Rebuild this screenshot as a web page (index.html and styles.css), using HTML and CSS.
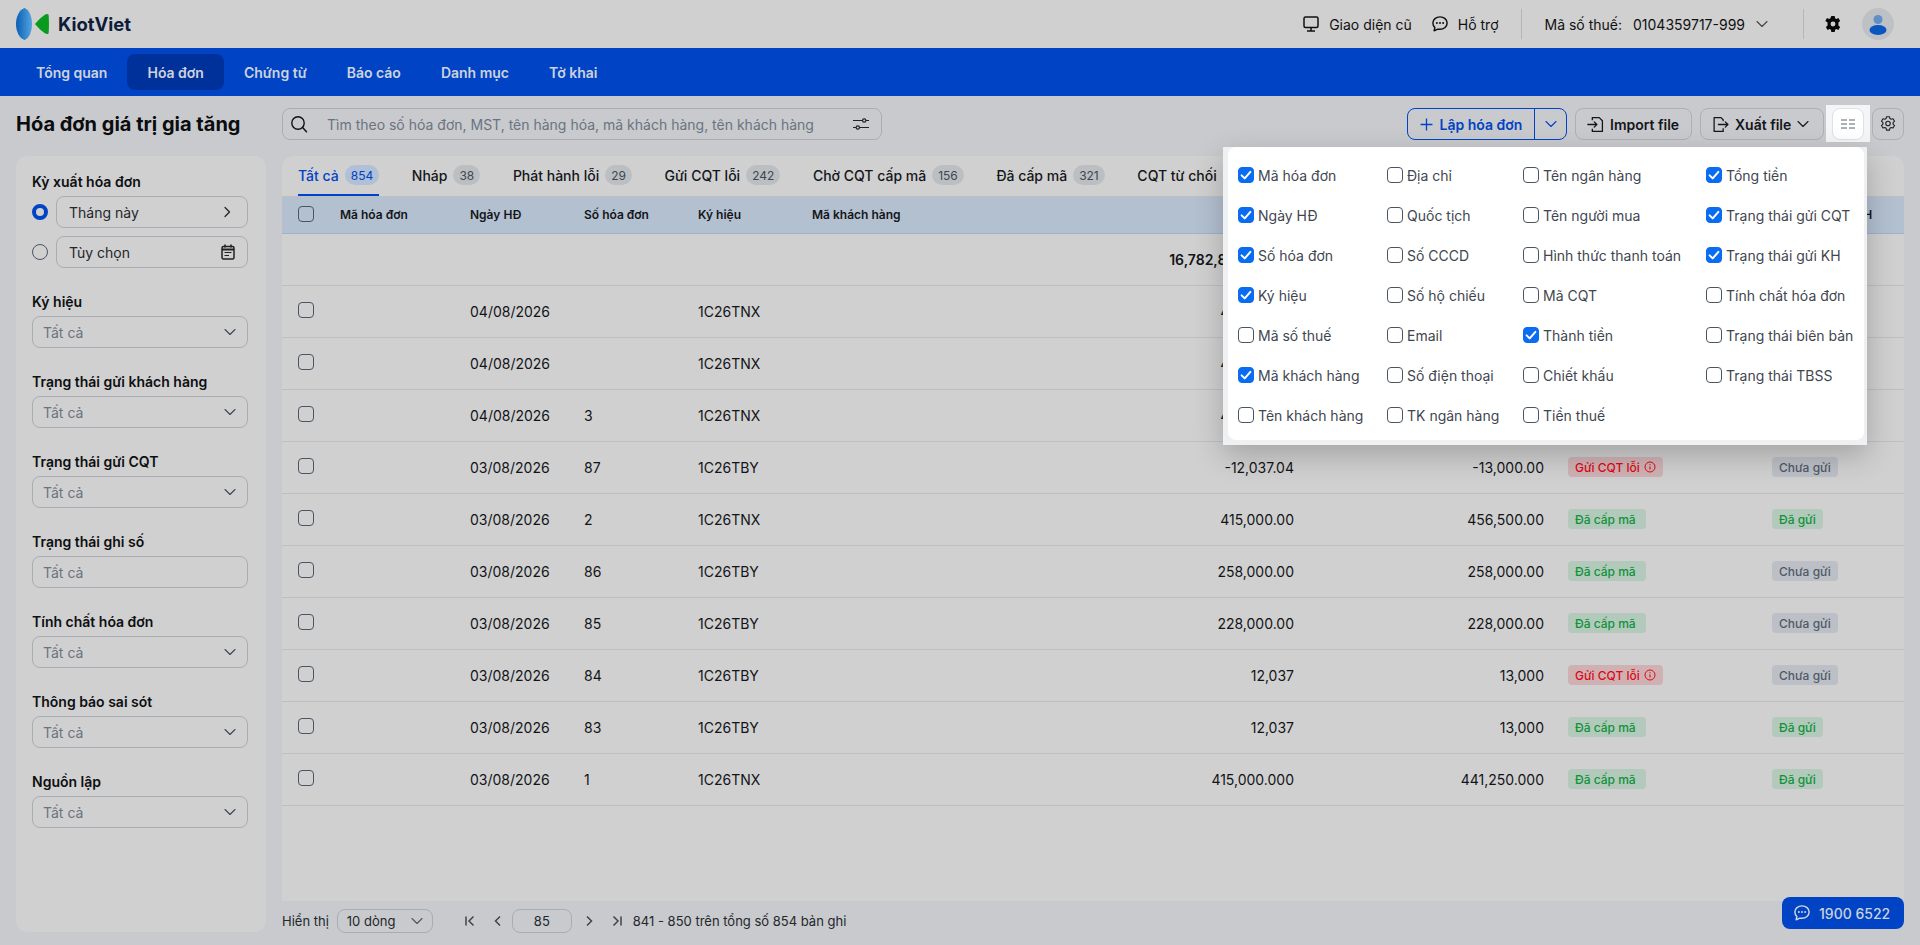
FILE: index.html
```html
<!DOCTYPE html>
<html lang="vi">
<head>
<meta charset="utf-8">
<title>Hóa đơn giá trị gia tăng</title>
<link rel="stylesheet" href="styles.css">
</head>
<body>
<svg class="sprite" width="0" height="0" aria-hidden="true">
  <symbol id="i-down" viewBox="0 0 12 12"><path d="M1 3.500 6 8.500l5-5" fill="none" stroke="currentColor" stroke-width="1.100" stroke-linecap="round" stroke-linejoin="round"/></symbol>
  <symbol id="i-check" viewBox="0 0 16 16"><path d="M3.600 8.400 6.700 11.400 12.400 4.900" fill="none" stroke="#fff" stroke-width="2" stroke-linecap="round" stroke-linejoin="round"/></symbol>
  <symbol id="i-info" viewBox="0 0 12 12"><circle cx="6" cy="6" r="5" fill="none" stroke="currentColor" stroke-width="1"/><path d="M6 5.400v3.200M6 3.200v1" stroke="currentColor" stroke-width="1.100"/></symbol>
  <symbol id="i-chat" viewBox="0.800 1 14.400 14.400"><path d="M8 1.800c3.600 0 6.400 2.400 6.400 5.600S11.600 13 8 13c-.7 0-1.300-.1-1.900-.2L2.700 14.300l.7-2.800C2.200 10.500 1.600 9.100 1.600 7.400 1.600 4.200 4.400 1.800 8 1.800z" fill="none" stroke="currentColor" stroke-width="1.300" stroke-linejoin="round"/><circle cx="5.200" cy="7.400" r=".9" fill="currentColor"/><circle cx="8" cy="7.400" r=".9" fill="currentColor"/><circle cx="10.800" cy="7.400" r=".9" fill="currentColor"/></symbol>
</svg>

<div class="page">
  <header class="topbar">
    <div class="brand">
      <svg class="logo" viewBox="0 0 33 32" width="33" height="32">
        <defs><linearGradient id="lg-blue" x1="0" y1="0" x2="1" y2="0"><stop offset="0" stop-color="#0a5fb4"/><stop offset="1" stop-color="#55a3de"/></linearGradient></defs>
        <path d="M8.500 0C3 2 0 9 0 16s3 14 8.500 16c5-2 7.500-9 7.500-16S13.500 2 8.500 0z" fill="url(#lg-blue)"/>
        <path d="M32.500 6.500c.6 3 .6 16 0 19-1 1-2.500.5-4-.5-3.500-2.300-6.500-5.500-9.500-9 3-3.500 6-6.700 9.500-9 1.500-1 3-1.500 4-.5z" fill="#0a9a1e"/>
      </svg>
      <span class="brand-name">KiotViet</span>
    </div>
    <div class="top-actions">
      <a class="top-link">
        <svg width="16" height="16" viewBox="0 0 16 16"><rect x="1" y="1" width="14" height="10.500" rx="1.500" fill="none" stroke="currentColor" stroke-width="1.500"/><path d="M8 11.500V15M4 15h8" stroke="currentColor" stroke-width="1.500"/></svg>
        <span>Giao diện cũ</span>
      </a>
      <a class="top-link">
        <svg width="16" height="16"><use href="#i-chat"/></svg>
        <span>Hỗ trợ</span>
      </a>
      <span class="vline vline-a"></span>
      <div class="tax">
        <span class="tax-label">Mã số thuế:</span>
        <span class="tax-no">0104359717-999</span>
        <svg class="tax-chev" width="12" height="12"><use href="#i-down"/></svg>
      </div>
      <span class="vline vline-b"></span>
      <svg class="gear" width="16" height="16" viewBox="1 0.800 14 14.400"><path fill-rule="evenodd" d="M6.500.8h3l.4 2 1.100.6 1.900-.7 1.500 2.600-1.500 1.300v2.800l1.500 1.300-1.500 2.600-1.900-.7-1.100.6-.4 2h-3l-.4-2-1.100-.6-1.900.7-1.500-2.600 1.500-1.300V6.600L1.100 5.300l1.500-2.600 1.900.7 1.100-.6zM8 5.800a2.200 2.200 0 1 0 0 4.400 2.200 2.200 0 0 0 0-4.400z" fill="#0a0a0a"/></svg>
      <span class="avatar">
        <svg width="32" height="32" viewBox="0 0 32 32"><circle cx="16" cy="11.500" r="4.500" fill="#5f8fc7"/><ellipse cx="16" cy="22" rx="8.500" ry="5" fill="#0a55c0"/></svg>
      </span>
    </div>
  </header>

  <nav class="mainnav">
    <a class="nav-item">Tổng quan</a>
    <a class="nav-item active">Hóa đơn</a>
    <a class="nav-item">Chứng từ</a>
    <a class="nav-item">Báo cáo</a>
    <a class="nav-item">Danh mục</a>
    <a class="nav-item">Tờ khai</a>
  </nav>

  <section class="toolbar">
    <h1 class="page-title">Hóa đơn giá trị gia tăng</h1>
    <div class="search">
      <svg class="search-ico" width="18" height="18" viewBox="0 0 18 18"><circle cx="8" cy="8" r="6.200" fill="none" stroke="#111" stroke-width="1.400"/><path d="M12.600 12.600 16.500 16.800" stroke="#111" stroke-width="1.500" stroke-linecap="round"/></svg>
      <span class="search-ph">Tìm theo số hóa đơn, MST, tên hàng hóa, mã khách hàng, tên khách hàng</span>
      <svg class="search-filter" width="16" height="16" viewBox="0 0 16 16"><path d="M0 4.500h9.500M13 4.500h3M0 11.500h3M6.500 11.500H16" stroke="#222" stroke-width="1.200"/><circle cx="11.200" cy="4.500" r="1.700" fill="none" stroke="#222" stroke-width="1.200"/><circle cx="4.800" cy="11.500" r="1.700" fill="none" stroke="#222" stroke-width="1.200"/></svg>
    </div>
    <div class="tool-actions">
      <div class="split">
        <button class="split-main">
          <svg width="13" height="13" viewBox="0 0 12 12"><path d="M6 .5v11M.5 6h11" stroke="currentColor" stroke-width="1.200"/></svg>
          <span>Lập hóa đơn</span>
        </button>
        <button class="split-arrow"><svg width="12" height="12"><use href="#i-down"/></svg></button>
      </div>
      <button class="tool-btn btn-import">
        <svg width="17" height="17" viewBox="0 0 16 16"><path d="M5 4V1.500h6.500L14.500 4.500V14.500H5V12" fill="none" stroke="currentColor" stroke-width="1.200" stroke-linejoin="round"/><path d="M.8 8h8.500M6.800 5.500 9.300 8l-2.500 2.500" fill="none" stroke="currentColor" stroke-width="1.200" stroke-linecap="round" stroke-linejoin="round"/></svg>
        <span>Import file</span>
      </button>
      <button class="tool-btn btn-export">
        <svg width="17" height="17" viewBox="0 0 16 16"><path d="M10.500 5V3.500l-2-2H2v13h8.500V11.500" fill="none" stroke="currentColor" stroke-width="1.200" stroke-linejoin="round"/><path d="M6 8h9M12.500 5.500 15 8l-2.500 2.500" fill="none" stroke="currentColor" stroke-width="1.200" stroke-linecap="round" stroke-linejoin="round"/></svg>
        <span>Xuất file</span>
        <svg width="12" height="12"><use href="#i-down"/></svg>
      </button>
      <div class="spot">
        <button class="icon-btn icon-btn-on">
          <svg width="14" height="10" viewBox="0 0 14 10"><path d="M0 1h6M8 1h6M0 5h6M8 5h6M0 9h6M8 9h6" stroke="#5b6470" stroke-width="1"/></svg>
        </button>
      </div>
      <button class="icon-btn">
        <svg width="18" height="18" viewBox="0 0 16 16"><path d="M6.700 1.500h2.600l.4 1.700 1.100.6 1.700-.5 1.300 2.200-1.300 1.300v1.300l1.300 1.300-1.300 2.200-1.700-.5-1.100.6-.4 1.700H6.700l-.4-1.700-1.100-.6-1.700.5L2.200 9.400l1.300-1.300V6.800L2.200 5.500l1.300-2.200 1.700.5 1.100-.6z" fill="none" stroke="#222" stroke-width="1" stroke-linejoin="round"/><circle cx="8" cy="7.500" r="2" fill="none" stroke="#222" stroke-width="1"/></svg>
      </button>
    </div>
  </section>

  <div class="workspace">
    <aside class="filters">
      <div class="fgroup">
        <label class="flabel">Kỳ xuất hóa đơn</label>
        <div class="period-row">
          <span class="radio radio-on"></span>
          <div class="field field-dark"><span>Tháng này</span>
            <svg width="12" height="12" viewBox="0 0 12 12"><path d="M4 1.500 8.500 6 4 10.500" fill="none" stroke="#222" stroke-width="1.200" stroke-linecap="round" stroke-linejoin="round"/></svg>
          </div>
        </div>
        <div class="period-row">
          <span class="radio"></span>
          <div class="field field-dark"><span>Tùy chọn</span>
            <svg class="cal" width="14" height="16" viewBox="0 0 14 16"><path d="M4 .5v3M10 .5v3" stroke="#222" stroke-width="1.600"/><rect x="1" y="2.500" width="12" height="12.500" rx="1.500" fill="none" stroke="#222" stroke-width="1.500"/><path d="M1 5.500h12" stroke="#222" stroke-width="2"/><path d="M3.500 8.500h7M3.500 11.500h4.500" stroke="#222" stroke-width="1.200"/></svg>
          </div>
        </div>
      </div>
      <div class="fgroup"><label class="flabel">Ký hiệu</label><div class="field"><span>Tất cả</span><svg width="12" height="12"><use href="#i-down"/></svg></div></div>
      <div class="fgroup"><label class="flabel">Trạng thái gửi khách hàng</label><div class="field"><span>Tất cả</span><svg width="12" height="12"><use href="#i-down"/></svg></div></div>
      <div class="fgroup"><label class="flabel">Trạng thái gửi CQT</label><div class="field"><span>Tất cả</span><svg width="12" height="12"><use href="#i-down"/></svg></div></div>
      <div class="fgroup"><label class="flabel">Trạng thái ghi số</label><div class="field"><span>Tất cả</span></div></div>
      <div class="fgroup"><label class="flabel">Tính chất hóa đơn</label><div class="field"><span>Tất cả</span><svg width="12" height="12"><use href="#i-down"/></svg></div></div>
      <div class="fgroup"><label class="flabel">Thông báo sai sót</label><div class="field"><span>Tất cả</span><svg width="12" height="12"><use href="#i-down"/></svg></div></div>
      <div class="fgroup"><label class="flabel">Nguồn lập</label><div class="field"><span>Tất cả</span><svg width="12" height="12"><use href="#i-down"/></svg></div></div>
    </aside>

    <main class="content">
      <div class="card">
        <div class="tabs">
          <a class="tab tab-on"><span>Tất cả</span><b class="count">854</b></a>
          <a class="tab"><span>Nháp</span><b class="count">38</b></a>
          <a class="tab"><span>Phát hành lỗi</span><b class="count">29</b></a>
          <a class="tab"><span>Gửi CQT lỗi</span><b class="count">242</b></a>
          <a class="tab"><span>Chờ CQT cấp mã</span><b class="count">156</b></a>
          <a class="tab"><span>Đã cấp mã</span><b class="count">321</b></a>
          <a class="tab"><span>CQT từ chối</span><b class="count">12</b></a>
        </div>
        <table class="grid">
          <colgroup>
            <col class="c-check"><col class="c-a"><col class="c-b"><col class="c-b"><col class="c-b"><col class="c-cust"><col class="c-amt"><col class="c-total"><col class="c-cqt"><col class="c-kh">
          </colgroup>
          <thead>
            <tr>
              <th><span class="cb"></span></th><th>Mã hóa đơn</th><th>Ngày HĐ</th><th>Số hóa đơn</th><th>Ký hiệu</th><th>Mã khách hàng</th>
              <th class="num"></th><th class="num"></th><th></th><th class="th-kh">Trạng thái gửi KH</th>
            </tr>
          </thead>
          <tbody>
            <tr class="sum"><td colspan="6"></td><td class="num">16,782,845,310.25</td><td></td><td></td><td></td></tr>
            <tr><td><span class="cb"></span></td><td></td><td>04/08/2026</td><td></td><td>1C26TNX</td><td></td><td class="num">415,000.00</td><td></td><td></td><td></td></tr>
            <tr><td><span class="cb"></span></td><td></td><td>04/08/2026</td><td></td><td>1C26TNX</td><td></td><td class="num">415,000.00</td><td></td><td></td><td></td></tr>
            <tr><td><span class="cb"></span></td><td></td><td>04/08/2026</td><td>3</td><td>1C26TNX</td><td></td><td class="num">415,000.00</td><td></td><td></td><td></td></tr>
            <tr><td><span class="cb"></span></td><td></td><td>03/08/2026</td><td>87</td><td>1C26TBY</td><td></td><td class="num">-12,037.04</td><td class="num">-13,000.00</td><td><span class="tag err">Gửi CQT lỗi<svg width="12" height="12"><use href="#i-info"/></svg></span></td><td><span class="tag mute">Chưa gửi</span></td></tr>
            <tr><td><span class="cb"></span></td><td></td><td>03/08/2026</td><td>2</td><td>1C26TNX</td><td></td><td class="num">415,000.00</td><td class="num">456,500.00</td><td><span class="tag ok code">Đã cấp mã</span></td><td><span class="tag ok">Đã gửi</span></td></tr>
            <tr><td><span class="cb"></span></td><td></td><td>03/08/2026</td><td>86</td><td>1C26TBY</td><td></td><td class="num">258,000.00</td><td class="num">258,000.00</td><td><span class="tag ok code">Đã cấp mã</span></td><td><span class="tag mute">Chưa gửi</span></td></tr>
            <tr><td><span class="cb"></span></td><td></td><td>03/08/2026</td><td>85</td><td>1C26TBY</td><td></td><td class="num">228,000.00</td><td class="num">228,000.00</td><td><span class="tag ok code">Đã cấp mã</span></td><td><span class="tag mute">Chưa gửi</span></td></tr>
            <tr><td><span class="cb"></span></td><td></td><td>03/08/2026</td><td>84</td><td>1C26TBY</td><td></td><td class="num">12,037</td><td class="num">13,000</td><td><span class="tag err">Gửi CQT lỗi<svg width="12" height="12"><use href="#i-info"/></svg></span></td><td><span class="tag mute">Chưa gửi</span></td></tr>
            <tr><td><span class="cb"></span></td><td></td><td>03/08/2026</td><td>83</td><td>1C26TBY</td><td></td><td class="num">12,037</td><td class="num">13,000</td><td><span class="tag ok code">Đã cấp mã</span></td><td><span class="tag ok">Đã gửi</span></td></tr>
            <tr><td><span class="cb"></span></td><td></td><td>03/08/2026</td><td>1</td><td>1C26TNX</td><td></td><td class="num">415,000.000</td><td class="num">441,250.000</td><td><span class="tag ok code">Đã cấp mã</span></td><td><span class="tag ok">Đã gửi</span></td></tr>
          </tbody>
        </table>
      </div>
      <footer class="pager">
        <span class="pager-label">Hiển thị</span>
        <div class="pager-select"><span>10 dòng</span><svg width="12" height="12"><use href="#i-down"/></svg></div>
        <div class="pager-nav">
          <svg width="12" height="12" viewBox="0 0 12 12"><path d="M2 1.500v9M9.500 1.500 5 6l4.500 4.500" fill="none" stroke="#444" stroke-width="1.500"/></svg>
          <svg class="pg-prev" width="12" height="12" viewBox="0 0 12 12"><path d="M8 1.500 3.500 6 8 10.500" fill="none" stroke="#444" stroke-width="1.500"/></svg>
          <span class="pager-input">85</span>
          <svg class="pg-next" width="12" height="12" viewBox="0 0 12 12"><path d="M4 1.500 8.500 6 4 10.500" fill="none" stroke="#444" stroke-width="1.500"/></svg>
          <svg class="pg-last" width="12" height="12" viewBox="0 0 12 12"><path d="M10 1.500v9M2.500 1.500 7 6l-4.500 4.500" fill="none" stroke="#444" stroke-width="1.500"/></svg>
        </div>
        <span class="pager-info">841 - 850 trên tổng số 854 bản ghi</span>
      </footer>
    </main>
  </div>

  <div class="popup">
    <div class="popup-inner">
      <label class="opt"><span class="cb on"><svg width="16" height="16"><use href="#i-check"/></svg></span>Mã hóa đơn</label>
      <label class="opt"><span class="cb on"><svg width="16" height="16"><use href="#i-check"/></svg></span>Ngày HĐ</label>
      <label class="opt"><span class="cb on"><svg width="16" height="16"><use href="#i-check"/></svg></span>Số hóa đơn</label>
      <label class="opt"><span class="cb on"><svg width="16" height="16"><use href="#i-check"/></svg></span>Ký hiệu</label>
      <label class="opt"><span class="cb"></span>Mã số thuế</label>
      <label class="opt"><span class="cb on"><svg width="16" height="16"><use href="#i-check"/></svg></span>Mã khách hàng</label>
      <label class="opt"><span class="cb"></span>Tên khách hàng</label>

      <label class="opt"><span class="cb"></span>Địa chỉ</label>
      <label class="opt"><span class="cb"></span>Quốc tịch</label>
      <label class="opt"><span class="cb"></span>Số CCCD</label>
      <label class="opt"><span class="cb"></span>Số hộ chiếu</label>
      <label class="opt"><span class="cb"></span>Email</label>
      <label class="opt"><span class="cb"></span>Số điện thoại</label>
      <label class="opt"><span class="cb"></span>TK ngân hàng</label>

      <label class="opt"><span class="cb"></span>Tên ngân hàng</label>
      <label class="opt"><span class="cb"></span>Tên người mua</label>
      <label class="opt"><span class="cb"></span>Hình thức thanh toán</label>
      <label class="opt"><span class="cb"></span>Mã CQT</label>
      <label class="opt"><span class="cb on"><svg width="16" height="16"><use href="#i-check"/></svg></span>Thành tiền</label>
      <label class="opt"><span class="cb"></span>Chiết khấu</label>
      <label class="opt"><span class="cb"></span>Tiền thuế</label>

      <label class="opt"><span class="cb on"><svg width="16" height="16"><use href="#i-check"/></svg></span>Tổng tiền</label>
      <label class="opt"><span class="cb on"><svg width="16" height="16"><use href="#i-check"/></svg></span>Trạng thái gửi CQT</label>
      <label class="opt"><span class="cb on"><svg width="16" height="16"><use href="#i-check"/></svg></span>Trạng thái gửi KH</label>
      <label class="opt"><span class="cb"></span>Tính chất hóa đơn</label>
      <label class="opt"><span class="cb"></span>Trạng thái biên bản</label>
      <label class="opt"><span class="cb"></span>Trạng thái TBSS</label>
    </div>
  </div>

  <a class="hotline">
    <svg width="16" height="16"><use href="#i-chat"/></svg>
    <span>1900 6522</span>
  </a>
</div>
</body>
</html>
```
FILE: styles.css
```css
* { box-sizing: border-box; }
html, body { margin: 0; padding: 0; }
body {
  font-family: Inter, "Noto Sans", "Liberation Sans", sans-serif;
  font-size: 14px;
  color: #121417;
  background: #c8cacd;
}
.sprite { position: absolute; }
svg { display: block; flex: none; }
.page {
  position: relative;
  width: 1920px;
  height: 945px;
  overflow: hidden;
  display: flex;
  flex-direction: column;
}

/* top bar */
.topbar {
  height: 48px;
  flex: none;
  display: flex;
  align-items: center;
  justify-content: space-between;
  padding: 0 26px 0 16px;
  background: #d0d0d0;
}
.brand { display: flex; align-items: center; gap: 9px; }
.brand-name { font-size: 18.5px; font-weight: 700; color: #0d1c3a; }
.top-actions { display: flex; align-items: center; }
.top-link { display: flex; align-items: center; gap: 10px; margin-right: 20px; color: #111; }
.vline { width: 1px; height: 30px; background: #b4b6b9; }
.vline-a { margin: 0 23px 0 2px; }
.tax { display: flex; align-items: center; color: #111; }
.tax-no { margin-left: 11px; }
.tax-chev { margin-left: 11px; color: #444; }
.vline-b { margin: 0 21px 0 35px; }
.avatar { width: 32px; height: 32px; margin-left: 21px; border-radius: 50%; background: #bdc1c6; overflow: hidden; }

/* main nav */
.mainnav {
  height: 48px;
  flex: none;
  display: flex;
  align-items: center;
  padding: 0 16px;
  background: #0043c5;
}
.nav-item {
  height: 36px;
  padding: 0 20px;
  display: flex;
  align-items: center;
  border-radius: 8px;
  font-weight: 600;
  color: #cdd3dc;
}
.nav-item.active { background: #00319a; }

/* toolbar */
.toolbar {
  flex: none;
  display: flex;
  align-items: center;
  height: 60px;
  padding: 12px 16px 16px;
}
.page-title { width: 266px; flex: none; margin: 0; font-size: 20px; font-weight: 700; color: #0b0c0e; line-height: 28px; }
.search {
  width: 600px;
  height: 32px;
  display: flex;
  align-items: center;
  padding: 0 12px 0 7px;
  border: 1px solid #a9adb3;
  border-radius: 8px;
}
.search-ph { flex: 1; margin-left: 19px; color: #6a7480; }
.tool-actions { margin-left: auto; display: flex; align-items: center; gap: 8px; }
.split {
  display: flex;
  height: 32px;
  border: 1px solid #0043c5;
  border-radius: 8px;
  color: #0043c5;
}
button { font: inherit; background: none; color: inherit; padding: 0; cursor: pointer; border: 0; }
.split-main { width: 127px; display: flex; align-items: center; justify-content: center; gap: 7px; font-weight: 600; border-right: 1px solid #0043c5; }
.split-arrow { width: 31px; display: flex; align-items: center; justify-content: center; }
.tool-btn {
  height: 32px;
  display: flex;
  align-items: center;
  gap: 6px;
  padding: 0 11px;
  border: 1px solid #adb0b4;
  border-radius: 8px;
  font-weight: 600;
  color: #14161a;
}
.btn-import { width: 117px; }
.btn-export { width: 124px; }
.icon-btn {
  width: 32px;
  height: 32px;
  display: flex;
  align-items: center;
  justify-content: center;
  border: 1px solid #adb0b4;
  border-radius: 8px;
}
.icon-btn-on { background: #fff; border-color: #dfe2e6; }
.spot { padding: 3px 6px 2px; margin: -3px -6px -2px; background: #f4f5f7; }

/* workspace */
.workspace {
  flex: 1;
  min-height: 0;
  display: flex;
  gap: 16px;
  padding: 0 16px;
}
.filters {
  width: 250px;
  height: 776px;
  flex: none;
  padding: 16px 18px 16px 16px;
  background: #d0d0d0;
  border-radius: 12px;
}
.fgroup { display: flex; flex-direction: column; margin-bottom: 24px; }
.flabel { height: 24px; line-height: 20px; font-weight: 600; color: #0d0f12; }
.period-row { display: flex; align-items: center; gap: 8px; margin-bottom: 8px; }
.period-row:last-child { margin-bottom: 0; }
.radio { width: 16px; height: 16px; flex: none; border-radius: 50%; border: 1px solid #4a5563; }
.radio-on { border: 4.5px solid #0043c5; background: #d0d0d0; }
.field {
  flex: none;
  height: 32px;
  display: flex;
  align-items: center;
  justify-content: space-between;
  padding: 0 11px 0 10px;
  border: 1px solid #a9adb3;
  border-radius: 8px;
  color: #6a7480;
}
.field svg { color: #3d4652; }
.period-row .field { flex: 1; padding: 0 12px; }
.field-dark { color: #24272c; }
.field-dark svg { margin-right: 2px; }
.field .cal { margin-right: 0; }

/* card + table */
.content { flex: 1; min-width: 0; display: flex; flex-direction: column; }
.card {
  height: 745px;
  flex: none;
  background: #d0d0d0;
  border-radius: 12px 12px 0 0;
  overflow: hidden;
}
.tabs {
  height: 41px;
  display: flex;
  gap: 32.6px;
  padding: 0 16px;
  border-bottom: 1px solid #bdbfc1;
}
.tab { height: 40px; display: flex; align-items: center; gap: 6px; font-weight: 500; color: #14161a; border-bottom: 2px solid transparent; }
.tab-on { color: #0043c5; border-bottom-color: #0043c5; }
.count {
  height: 20px;
  padding: 0 6px;
  display: flex;
  align-items: center;
  border-radius: 10px;
  background: #bcbfc2;
  font-size: 12px;
  font-weight: 400;
  color: #3d4652;
}
.tab-on .count { background: #b1c0d6; color: #0043c5; }
.grid { width: 1622px; border-collapse: collapse; table-layout: fixed; }
.c-check { width: 42px; }
.c-a { width: 130px; }
.c-b { width: 114px; }
.c-cust { width: 254px; }
.c-amt { width: 252px; }
.c-total { width: 250px; }
.c-cqt { width: 204px; }
.c-kh { width: 148px; }
.grid th {
  height: 36px;
  padding: 0 0 0 16px;
  background: #b3c0d0;
  border-bottom: 1px solid #9fb2cf;
  font-size: 12px;
  font-weight: 600;
  text-align: left;
  white-space: nowrap;
  color: #14161a;
}
.grid td { height: 52px; padding: 0 0 0 16px; border-bottom: 1px solid #bdbfc1; white-space: nowrap; }
.grid th:first-child .cb, .grid td:first-child .cb { position: relative; top: -1px; }
.grid .num { text-align: right; padding: 0 8px 0 0; }
.sum td { font-weight: 600; }
.cb {
  width: 16px;
  height: 16px;
  flex: none;
  display: block;
  border: 1px solid #4a5563;
  border-radius: 4px;
}
.cb.on { background: #0a6cf0; border-color: #0a6cf0; }
.cb.on svg { margin: -1px; }
.tag {
  display: inline-flex;
  align-items: center;
  gap: 4px;
  height: 20px;
  padding: 0 7px;
  border-radius: 4px;
  font-size: 12px;
  font-weight: 500;
  vertical-align: middle;
}
.ok { background: #b3c9bb; color: #0f9238; }
.code { padding-right: 10px; }
.err { background: #cfb1b4; color: #dc0a12; }
.mute { background: #bcc0c6; color: #4f5966; }

/* pager */
.pager { flex: 1; display: flex; align-items: center; padding-bottom: 4px; color: #24272c; font-size: 13px; }
.pager-select {
  width: 96px;
  height: 24px;
  margin-left: 8px;
  display: flex;
  align-items: center;
  justify-content: space-between;
  padding: 0 9px;
  border: 1px solid #a9adb3;
  border-radius: 8px;
  font-size: 13px;
}
.pager-select svg { color: #555; }
.pager-nav { display: flex; align-items: center; margin-left: 31px; }
.pg-prev { margin-left: 16px; }
.pager-input {
  width: 60px;
  height: 24px;
  margin: 0 11px 0 8px;
  display: flex;
  align-items: center;
  justify-content: center;
  border: 1px solid #a9adb3;
  border-radius: 8px;
}
.pg-last { margin-left: 16px; }
.pager-info { margin-left: 10px; }

/* column picker */
.popup {
  position: absolute;
  left: 1223px;
  top: 147px;
  width: 644px;
  height: 298px;
  padding: 0 3px 5px 5px;
  background: #eff0f1;
  box-shadow: 0 10px 28px rgba(0, 0, 0, .22);
}
.popup-inner {
  height: 100%;
  padding: 8px 0 0 10px;
  background: #fff;
  border-radius: 8px;
  display: grid;
  grid-auto-flow: column;
  grid-template-rows: repeat(7, 40px);
  grid-template-columns: 149px 136px 183px 1fr;
}
.opt { display: flex; align-items: center; gap: 4px; color: #3f4650; white-space: nowrap; }

/* hotline */
.hotline {
  position: absolute;
  left: 1782px;
  top: 897px;
  width: 122px;
  height: 32px;
  display: flex;
  align-items: center;
  gap: 9px;
  padding-left: 12px;
  border-radius: 8px;
  background: #0043c5;
  color: #cdd3dc;
  font-weight: 500;
}
```
